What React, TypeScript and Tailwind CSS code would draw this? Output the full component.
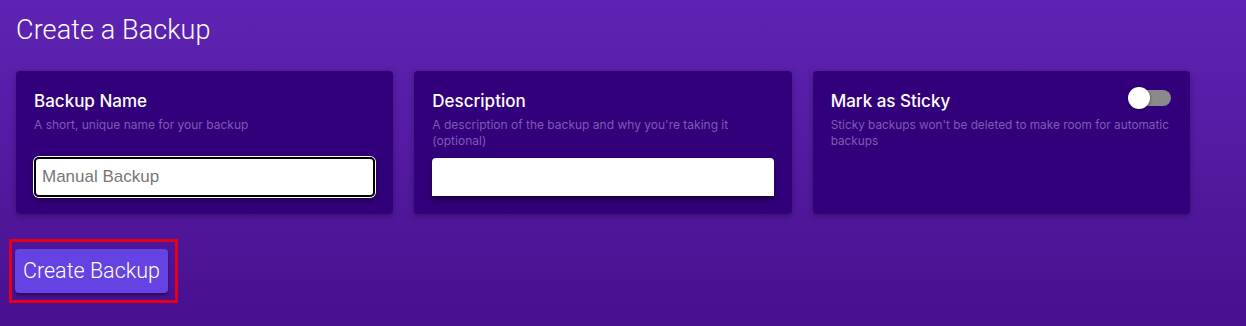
export default function App() {
  return (
    <div className="w-[1246px] h-[326px] bg-gradient-to-b from-[#5f23b3] to-[#48108f] pl-4 pt-[14px] font-['Inter',sans-serif] overflow-hidden">
      <h1 className="font-['Roboto',sans-serif] font-light text-[27px] leading-8 text-white tracking-[0.1px]">Create a Backup</h1>
      <div className="grid grid-cols-3 gap-[21px] w-[1174px] mt-[25px]">
        <div className="h-[143px] rounded bg-[#32007a] shadow-[0_2px_6px_rgba(0,0,0,0.3)] px-[18px] pt-[20px]">
          <h2 className="text-white text-[17px] font-medium leading-5">Backup Name</h2>
          <p className="text-[#7d5cb4] text-[12px] leading-4 mt-[6px] min-h-[32px]">A short, unique name for your backup</p>
          <div className="mt-[8px] rounded-[5px] ring-1 ring-white shadow-[0_3px_6px_rgba(0,0,0,0.45)]">
            <input
              placeholder="Manual Backup"
              className="w-full h-[40px] rounded-[5px] border-2 border-black bg-white px-[6px] text-[17px] font-['Liberation_Sans',sans-serif] text-gray-800 placeholder:text-[#777] outline-none"
            />
          </div>
        </div>
        <div className="h-[143px] rounded bg-[#32007a] shadow-[0_2px_6px_rgba(0,0,0,0.3)] px-[18px] pt-[20px]">
          <h2 className="text-white text-[17px] font-medium leading-5">Description</h2>
          <p className="text-[#7d5cb4] text-[12px] leading-4 mt-[6px] min-h-[32px]">A description of the backup and why you're taking it (optional)</p>
          <input className="mt-[9px] w-full h-[38px] rounded-t-[4px] bg-white shadow-[0_4px_6px_rgba(0,0,0,0.45)] outline-none" />
        </div>
        <div className="h-[143px] rounded bg-[#32007a] shadow-[0_2px_6px_rgba(0,0,0,0.3)] px-[18px] pt-[20px]">
          <div className="flex items-start justify-between">
            <h2 className="text-white text-[17px] font-medium leading-5">Mark as Sticky</h2>
            <div className="relative mt-[-3px] mr-[1px] w-[43px] h-[20px]">
              <div className="absolute left-[4px] right-0 top-[2px] h-[16px] rounded-full bg-[#8a8a8a]"></div>
              <div className="absolute left-0 top-0 w-[22px] h-[22px] -mt-[1px] rounded-full bg-white shadow-[0_1px_3px_rgba(0,0,0,0.5)]"></div>
            </div>
          </div>
          <p className="text-[#7d5cb4] text-[11.8px] leading-4 mt-[6px] -mr-[6px]">Sticky backups won't be deleted to make room for automatic backups</p>
        </div>
      </div>
      <div className="mt-[25px] -ml-[7px] w-[169px] h-[64px] border-[3px] border-[#e5001a] pt-[7px] pl-[3px]">
        <button className="w-[153px] h-[44px] rounded bg-[#6542e2] shadow-[0_3px_3px_rgba(0,0,0,0.35)] font-['Roboto',sans-serif] font-light text-[21.5px] text-white">Create Backup</button>
      </div>
    </div>
  );
}
